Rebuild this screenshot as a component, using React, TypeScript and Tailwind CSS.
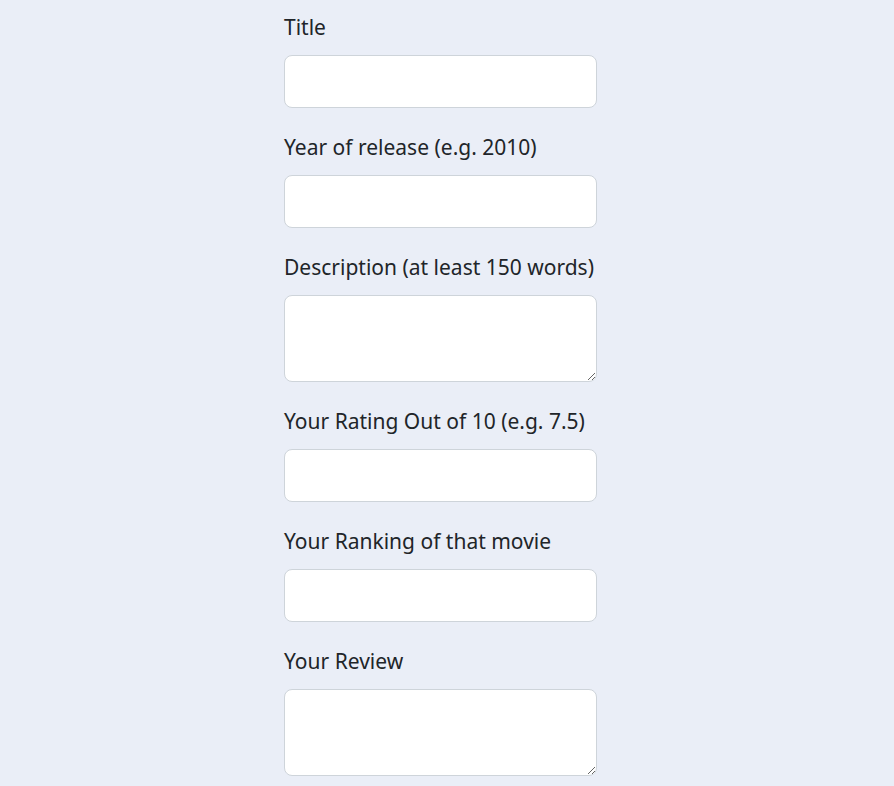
import React from "react";

const font = { fontFamily: '"Segoe UI", "Noto Sans", "Open Sans", sans-serif' };

function Field({ label, area }: { label: string; area?: boolean }) {
  return (
    <div className="flex flex-col">
      <label className="h-[30px] text-[21px] leading-[30px] text-[#212529] mb-[13px] whitespace-nowrap">{label}</label>
      {area ? (
        <textarea className="h-[87px] w-full rounded-[8px] border border-[#ced4da] bg-white block" />
      ) : (
        <input className="h-[53px] w-full rounded-[8px] border border-[#ced4da] bg-white block" />
      )}
    </div>
  );
}

export default function App() {
  return (
    <div className="min-h-[786px] w-full bg-[#eaeef7]" style={font}>
      <div className="ml-[284px] w-[313px] pt-[12px] flex flex-col gap-[24px]">
        <Field label="Title" />
        <Field label="Year of release (e.g. 2010)" />
        <Field label="Description (at least 150 words)" area />
        <Field label="Your Rating Out of 10 (e.g. 7.5)" />
        <Field label="Your Ranking of that movie" />
        <Field label="Your Review" area />
      </div>
    </div>
  );
}
